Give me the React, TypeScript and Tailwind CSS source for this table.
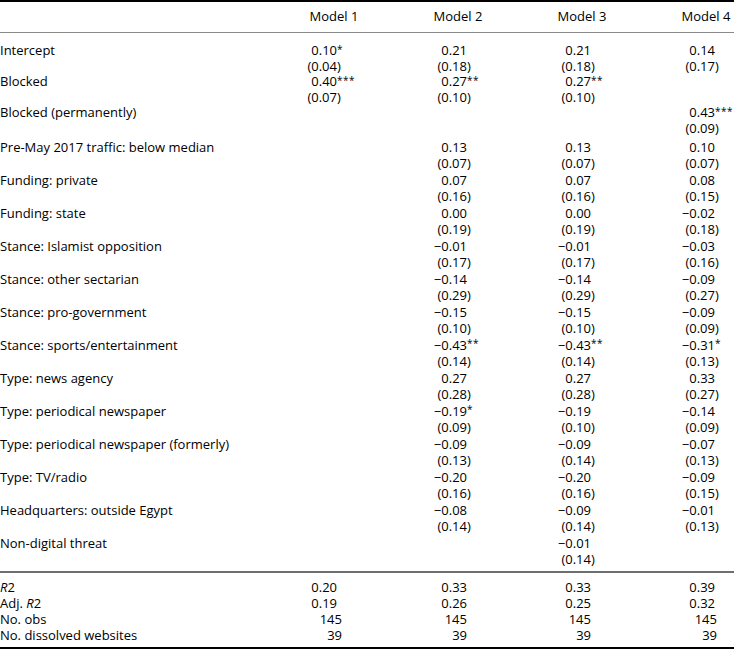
import React from "react";

/* ── Data ───────────────────────────────────────────────────────────── */

type Row = { label: string; vals: string[][] };

// each model: [estimate, std. error]; empty array = blank cell
const ROWS_TOP: Row[] = [
  { label: "Intercept", vals: [["0.10*", "(0.04)"], ["0.21", "(0.18)"], ["0.21", "(0.18)"], ["0.14", "(0.17)"]] },
  { label: "Blocked", vals: [["0.40***", "(0.07)"], ["0.27**", "(0.10)"], ["0.27**", "(0.10)"], []] },
  { label: "Blocked (permanently)", vals: [[], [], [], ["0.43***", "(0.09)"]] },
];

const ROWS: Row[] = [
  { label: "Pre-May 2017 traffic: below median", vals: [[], ["0.13", "(0.07)"], ["0.13", "(0.07)"], ["0.10", "(0.07)"]] },
  { label: "Funding: private", vals: [[], ["0.07", "(0.16)"], ["0.07", "(0.16)"], ["0.08", "(0.15)"]] },
  { label: "Funding: state", vals: [[], ["0.00", "(0.19)"], ["0.00", "(0.19)"], ["−0.02", "(0.18)"]] },
  { label: "Stance: Islamist opposition", vals: [[], ["−0.01", "(0.17)"], ["−0.01", "(0.17)"], ["−0.03", "(0.16)"]] },
  { label: "Stance: other sectarian", vals: [[], ["−0.14", "(0.29)"], ["−0.14", "(0.29)"], ["−0.09", "(0.27)"]] },
  { label: "Stance: pro-government", vals: [[], ["−0.15", "(0.10)"], ["−0.15", "(0.10)"], ["−0.09", "(0.09)"]] },
  { label: "Stance: sports/entertainment", vals: [[], ["−0.43**", "(0.14)"], ["−0.43**", "(0.14)"], ["−0.31*", "(0.13)"]] },
  { label: "Type: news agency", vals: [[], ["0.27", "(0.28)"], ["0.27", "(0.28)"], ["0.33", "(0.27)"]] },
  { label: "Type: periodical newspaper", vals: [[], ["−0.19*", "(0.09)"], ["−0.19", "(0.10)"], ["−0.14", "(0.09)"]] },
  { label: "Type: periodical newspaper (formerly)", vals: [[], ["−0.09", "(0.13)"], ["−0.09", "(0.14)"], ["−0.07", "(0.13)"]] },
  { label: "Type: TV/radio", vals: [[], ["−0.20", "(0.16)"], ["−0.20", "(0.16)"], ["−0.09", "(0.15)"]] },
  { label: "Headquarters: outside Egypt", vals: [[], ["−0.08", "(0.14)"], ["−0.09", "(0.14)"], ["−0.01", "(0.13)"]] },
  { label: "Non-digital threat", vals: [[], [], ["−0.01", "(0.14)"], []] },
];

const STATS: { label: React.ReactNode; vals: string[] }[] = [
  { label: <><i>R</i>2</>, vals: ["0.20", "0.33", "0.33", "0.39"] },
  { label: <>Adj. <i>R</i>2</>, vals: ["0.19", "0.26", "0.25", "0.32"] },
  { label: "No. obs", vals: ["145", "145", "145", "145"] },
  { label: "No. dissolved websites", vals: ["39", "39", "39", "39"] },
];

const MODELS = ["Model 1", "Model 2", "Model 3", "Model 4"];
// width of the right-aligned part, so decimals line up per column
const ALIGN = ["w-[65px]", "w-[71px]", "w-[71px]", "w-[71px]"];
// integer stats sit a little further right in the source table
const ALIGN_INT = ["w-[70px]", "w-[71px]", "w-[71px]", "w-[73px]"];
const GRID = "grid grid-cols-[272px_124px_124px_124px_90px]";

/* ── Cells ──────────────────────────────────────────────────────────── */

function Num({ v, col, w }: { v: string; col: number; w?: string }) {
  const m = v.match(/^(.*\d)(\D*)$/);
  const main = m ? m[1] : v;
  const tail = m ? m[2] : "";
  const stars = tail.startsWith("*");
  return (
    <div className="flex whitespace-nowrap">
      <span className={`${w ?? ALIGN[col]} shrink-0 text-right`}>{main}</span>
      {stars ? (
        <span className="text-[10px] leading-none align-top pt-[1px] tracking-[0.5px]">{tail}</span>
      ) : (
        <span>{tail}</span>
      )}
    </div>
  );
}

function BodyRow({ row, lh }: { row: Row; lh: string }) {
  return (
    <div className={`${GRID} ${lh}`}>
      <div className="whitespace-nowrap">{row.label}</div>
      {row.vals.map((pair, i) => (
        <div key={i}>
          {pair.map((v) => (
            <Num key={v} v={v} col={i} />
          ))}
        </div>
      ))}
    </div>
  );
}

/* ── Page ───────────────────────────────────────────────────────────── */

export default function App() {
  return (
    <div className="w-[734px] h-[651px] overflow-hidden bg-white text-[13px] text-black font-['Open_Sans',sans-serif]">
      <div className="border-t-2 border-black">
        <div className={`${GRID} h-[30px] items-center`}>
          <div />
          {MODELS.map((m) => (
            <div key={m} className="w-[124px] text-center">
              {m}
            </div>
          ))}
        </div>
        <div className="border-t border-[#8a8a8a]" />

        <div className="pt-[10px]">
          {ROWS_TOP.map((r) => (
            <BodyRow key={r.label} row={r} lh="leading-[15.6px]" />
          ))}
        </div>
        <div className="mt-[2px] pb-[3px]">
          {ROWS.map((r) => (
            <BodyRow key={r.label} row={r} lh="leading-[16.5px]" />
          ))}
        </div>

        <div className="border-t-2 border-[#6e6e6e]" />
        <div className="pt-[6px] pb-[4px] leading-[16px]">
          {STATS.map((s, i) => (
            <div key={i} className={GRID}>
              <div className="whitespace-nowrap">{s.label}</div>
              {s.vals.map((v, j) => (
                <Num key={j} v={v} col={j} w={v.includes(".") ? undefined : ALIGN_INT[j]} />
              ))}
            </div>
          ))}
        </div>
        <div className="border-t-2 border-black" />
      </div>
    </div>
  );
}
